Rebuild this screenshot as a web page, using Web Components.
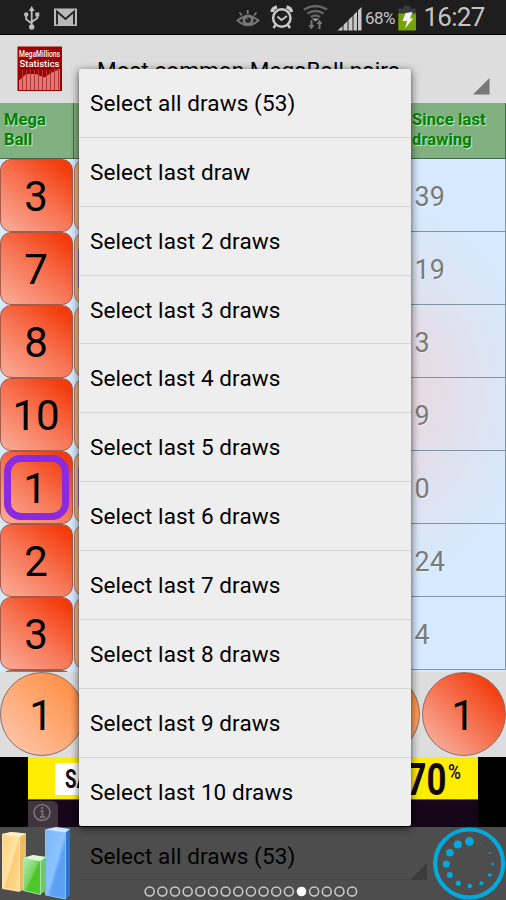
<!DOCTYPE html>
<html lang="en"><head><meta charset="utf-8"><title>MegaMillions Statistics</title>
<style>
body{margin:0;width:506px;height:900px;overflow:hidden;font-family:Roboto,"Liberation Sans",sans-serif;background:#ddd}
</style></head><body><stats-app></stats-app>
<script>
function define(name, render){
  customElements.define(name, class extends HTMLElement{
    connectedCallback(){
      if(this.shadowRoot) return;
      const t=document.createElement('template');
      t.innerHTML=render(this);
      this.attachShadow({mode:'open'}).append(t.content.cloneNode(true));
    }
  });
}
define('status-bar',()=>`
<style>
:host{display:flex;background:#1e1e1e;border-bottom:1px solid #000;box-sizing:border-box;height:35px;color:#c4c4c4}
svg{display:block;flex:none}
.pct{font-size:17px;line-height:36px;width:32px;white-space:nowrap;letter-spacing:-.6px}
.time{font-size:26px;line-height:35px;margin-left:6.500px;white-space:nowrap;letter-spacing:-.75px}
</style>
<svg width="365" height="34" viewBox="0 0 365 34">
<g fill="none" stroke="#bdbdbd" stroke-width="1.8"><path d="M31.7 9V27M26.2 15v4.200l5.500 4.300M37.400 14v4l-5.700 4"/></g>
<g fill="#bdbdbd"><path d="M31.700 6l3 5h-6z"/><circle cx="26.200" cy="14.500" r="2.200"/><rect x="35.300" y="12.500" width="4" height="4"/><circle cx="31.700" cy="27" r="2.700"/></g>
<rect x="54" y="8.500" width="23" height="17.500" fill="#b9b9b9"/><path d="M57 24.500V11.500L65.500 19 74 11.500V24.500" fill="none" stroke="#242424" stroke-width="1.900"/>
<g fill="none" stroke="#777" stroke-width="1.900"><path d="M237.500 20.500q10.500-9 21 0q-10.500 9.500-21 0z"/><path d="M247.700 10v4M239.500 12.500l2.500 3M256.500 12.500l-2.500 3"/><circle cx="248" cy="20" r="4.200" stroke-width="2.800"/></g><path d="M249 21l-4-3.500 1-1z" fill="#888"/>
<g fill="none" stroke="#c8c8c8"><circle cx="281.800" cy="18" r="8.700" stroke-width="2.500"/><path d="M277.500 16.500l4 3.500 5.500-4" stroke-width="1.900"/><path d="M272 12q.5-4 5-5M291.500 12q-.5-4-5-5" stroke-width="3.500"/><path d="M275.500 25l-2 3M288 25l2 3" stroke-width="2.500"/></g>
<g fill="none" stroke="#666" stroke-width="2.500"><path d="M304 9.500q11.500-7 23 0M307.500 13.500q8-5 16 0M311 17q4.500-3 9 0"/></g><path d="M312 18.500h7l-3.500 3z" fill="#aaa"/>
<path d="M311.500 20v6M319.500 29v-6" stroke="#777" stroke-width="2"/><path d="M308.500 25h6l-3 4.500zM316.500 24h6l-3-4.500z" fill="#777"/>
<g fill="#c8c8c8"><path d="M337.500 30.500l5-4.500v4.500zM343.500 25l4-4v9.500h-4zM348.500 20l4-4v14.500h-4zM353.500 15l3.500-3.500v19h-3.500zM358 10.500l3.500-3.500v23.500h-3.500z"/></g>
</svg>
<span class="pct">68%</span>
<svg width="20" height="34" viewBox="397 0 20 34"><path d="M403.500 6h7v2.500h5.300v5.500h-17.500v-5.500h5.200z" fill="#3c3c3c"/><rect x="398.300" y="13.500" width="17.700" height="17" fill="#76a307"/><path d="M405.500 13l7-1-2.500 6.500h3.200l-8.200 10 2-7.500h-4.500z" fill="#f2f2f2"/></svg>
<span class="time">16:27</span>`);

define('title-bar',()=>`
<style>
:host{display:flex;height:68px;background:#ddd;box-sizing:border-box;padding:11px 16px 0 17px;align-items:flex-start}
.logo{width:45px;height:45px;flex:none}
.t{flex:1;margin:11px 0 0 35px;font-size:22.5px;line-height:26px;color:#000;white-space:nowrap;letter-spacing:.07px}
.tri{margin-top:32px}
svg{display:block}
</style>
<svg class="logo" viewBox="0 0 45 45"><rect x=".5" y=".5" width="44.500" height="44.500" fill="#9d0000"/>
<path d="M2 44V34.500L9 28H19l8 3.500 8-5 8-3.500V44z" fill="#de7878"/>
<path d="M5.500 24v20M9.500 24v20M13.500 24v20M17.500 24v20M21.500 24v20M25.500 24v20M29.500 24v20M33.500 24v20M37.500 22v22M41.500 22v22" stroke="#b83535" stroke-width="1"/>
<g fill="#fff" font-family="Roboto" text-anchor="middle"><text x="22.500" y="10.800" font-size="8.400" font-weight="500" textLength="41" lengthAdjust="spacingAndGlyphs">MegaMillions</text><text x="22.500" y="20.800" font-size="9.900" font-weight="500" textLength="40" lengthAdjust="spacingAndGlyphs">Statistics</text></g></svg>
<span class="t"><slot></slot></span>
<svg class="tri" width="17" height="17"><path d="M16.500 0V16.500H0z" fill="#777"/></svg>`);

define('head-cell',()=>`
<style>:host{display:block;box-sizing:border-box;background:#81b081;border-right:1px solid #45684a;border-bottom:1px solid #45684a;color:#008200;font-weight:700;font-size:16.500px;line-height:20px;padding:6.500px 0 0 4px;text-shadow:1px 1px 1px #d5e8d5;letter-spacing:.1px}</style><slot></slot>`);
define('ball-tile',()=>`
<style>
:host{display:flex;box-sizing:border-box;height:73.100px;border:1px solid #a85a48;border-radius:11px;align-items:center;justify-content:center;font-size:42px;color:#000;background:linear-gradient(38deg,#faae9b 0%,#f77352 50%,#f33c0c 90%);position:relative;padding:2px 1px 0 0}
:host([tone=orange]){background:linear-gradient(90deg,#eeb48c,#ffb27c 40%,#ff9448);border-color:#a87a60}
:host([picked])::after{content:"";position:absolute;left:2.500px;top:3px;width:51px;height:51px;border:7px solid #8a2be2;border-radius:17px}
:host([picked]){padding-right:3px}
</style><slot></slot>`);
define('since-cell',()=>`
<style>:host{display:flex;box-sizing:border-box;height:73.100px;align-items:center;padding:4px 0 0 6.500px;border-bottom:1px solid #8394a5;border-right:1px solid #8394a5;color:#7b7b7b;font-size:27px;text-shadow:1px 1px 1px #fff8}</style><slot></slot>`);
define('stats-table',()=>{
  const balls=[3,7,8,10,1,2,3], since=[39,19,3,9,0,24,4];
  return `
<style>
:host{display:grid;grid-template-columns:74px 334px 98px;grid-template-rows:55.500px 513.500px;height:569px;overflow:hidden;background:radial-gradient(ellipse 140px 190px at 395px 290px,#e8d9df 0,#e4dee8 35%,#d5eafe 100%) #d5eafe}
.c{overflow:hidden}.c ball-tile{width:73px}
.m ball-tile{width:80px}
.m{overflow:hidden}
</style>
<head-cell>Mega<br>Ball</head-cell><head-cell></head-cell><head-cell>Since last<br>drawing</head-cell>
<div class="c">${balls.map((n,i)=>`<ball-tile${i===4?' picked':''}>${n}</ball-tile>`).join('')}<ball-tile></ball-tile></div>
<div class="m">${balls.map(()=>'<ball-tile tone="orange"></ball-tile>').join('')}</div>
<div>${since.map(n=>`<since-cell>${n}</since-cell>`).join('')}</div>`;
});
define('round-ball',()=>`
<style>:host{display:flex;box-sizing:border-box;flex:none;width:84px;height:84px;border:1px solid #8a6f62;border-radius:50%;align-items:center;justify-content:center;padding:3px 2px 0 0;font-size:42px;color:#000;background:linear-gradient(45deg,#ffc4a8 10%,#ff9148 85%)}
:host([tone=red]){background:linear-gradient(45deg,#f9ab98 12%,#f33e10 85%)}</style><slot></slot>`);
define('ball-row',()=>`
<style>:host{display:flex;height:85px;box-sizing:border-box;justify-content:space-between}
.r{display:flex;gap:2px}</style>
<round-ball>1</round-ball><div class="r"><round-ball></round-ball><round-ball tone="red">1</round-ball></div>`);
define('ad-banner',()=>`
<style>
:host{display:flex;height:70px;background:#000;padding:0 28px;box-sizing:border-box}
.ad{flex:1;display:grid;grid-template-rows:43px 27px;background:#150618}
.y{background:#ffed00;display:flex;justify-content:space-between;box-sizing:border-box;border-bottom:1px solid #6e6600;color:#150618;overflow:hidden}
.s{background:#fff;width:70px;height:32px;margin:6px 0 0 27px;padding-left:10px;box-sizing:border-box}
svg{display:block}
</style>
<div class="ad"><div class="y"><div class="s"><svg width="50" height="32"><text x="0" y="25" font-family="Roboto" font-weight="700" font-size="26" fill="#150618" transform="scale(.72 1)">SA</text></svg></div>
<svg width="90" height="42"><g fill="#150618" font-family="Roboto" font-weight="700"><text transform="translate(18.500 38) scale(.79 1)" font-size="44">70</text><text transform="translate(60 21.500) scale(.88 1)" font-size="20" font-weight="500">%</text></g></svg></div>
<svg width="32" height="27"><path d="M0 1h24q6 0 6 6v20H0z" fill="#40353f"/><circle cx="14" cy="12.500" r="8" fill="none" stroke="#777077" stroke-width="1.700"/><path d="M12.500 11h2v6M12 17h5M13 8h2.200" stroke="#777077" stroke-width="1.800" fill="none"/></svg></div>`);
define('bottom-bar',()=>{
  const rs=[4.4,4,3.8,3.5,3,2.6,2.3,2,1.8,1.3,1.1,.6];
  const pos=[[43.6,14.5],[32,17.600],[24,25.700],[20.500,37],[24,48],[32.500,56.200],[44,59],[55.500,56.200],[64,48],[67,37],[64,26],[55.500,17.600]];
  return `
<style>
:host{display:grid;grid-template-columns:79px 1fr 78px;height:73px;background:#4d4d4d;position:relative}
svg{display:block}
.sel{font-size:22.500px;line-height:26px;padding:16px 0 0 11px;letter-spacing:.1px;color:#000;box-sizing:border-box;height:53px;border-bottom:1px solid #454545}
.dots{position:absolute;left:144px;top:58px}
.tri{position:absolute;left:410px;top:36px}
</style>
<svg width="79" height="73" viewBox="0 827 79 73"><defs>
<linearGradient id="y" x2="1" y2="1"><stop stop-color="#ffd07c"/><stop offset=".5" stop-color="#ffe3a4"/><stop offset=".55" stop-color="#fccb75"/><stop offset="1" stop-color="#ffdf9e"/></linearGradient>
<linearGradient id="g" x2="1" y2="1"><stop stop-color="#b3eeb0"/><stop offset=".45" stop-color="#7bd568"/><stop offset=".55" stop-color="#4bc626"/><stop offset="1" stop-color="#4fc832"/></linearGradient>
<linearGradient id="b" x2="1" y2="1"><stop stop-color="#79b8fa"/><stop offset=".5" stop-color="#8cc3ff"/><stop offset=".6" stop-color="#5c9ff3"/><stop offset="1" stop-color="#5ba2f6"/></linearGradient></defs>
<path d="M2 834l9-2 15 1.500v55l-7 3.500-17-3z" fill="#e9ba69"/><path d="M2.500 834.500l17 2.500v54l-17-3z" fill="url(#y)" stroke="#ffe9b8" stroke-width=".8"/><path d="M2 834l9-2 15 1.500-6.500 3.500z" fill="#fff0cf"/>
<path d="M45 829.500l11-2.500 14 2v66l-4 4-21-4z" fill="#2e74cc"/><path d="M45.500 830l20 2.500v66.500l-20-4z" fill="url(#b)" stroke="#9ccbfd" stroke-width=".8"/><path d="M45 829.500l11-2.500 14 2-4.500 3.500z" fill="#cfe7ff"/>
<path d="M23 858l10-3 13 2v34l-6 3.500-17-4z" fill="#6cc872"/><path d="M23.500 858.500l17 2.500v33.500l-17-4z" fill="url(#g)" stroke="#b9edae" stroke-width=".8"/><path d="M23 858l10-3 13 2-5.500 4z" fill="#ddf8d8"/></svg>
<div class="sel">Select all draws (53)</div>
<svg width="78" height="73" viewBox="5 0 78 73"><circle cx="46.200" cy="36.500" r="34" fill="none" stroke="#04a9dc" stroke-width="4.200"/>
<g fill="#04a9dc" transform="translate(2.800 0)">${pos.map((p,i)=>`<circle cx="${p[0]}" cy="${p[1]}" r="${rs[i]}"/>`).join('')}</g></svg>
<svg class="tri" width="17" height="17"><path d="M17 0V17H0z" fill="#3b3b3b"/></svg>
<svg class="dots" width="216" height="14">${Array.from({length:17},(_,i)=>`<circle cx="${5.700+i*12.650}" cy="6.500" r="${i===12?4.800:4.500}" fill="${i===12?'#fff':'none'}" stroke="${i===12?'none':'#ccc'}" stroke-width="1.500"/>`).join('')}</svg>`;
});
define('draw-option',()=>`
<style>:host{display:block;box-sizing:border-box;height:68.930px;box-shadow:inset 0 -1px #d4d4d4;padding:21px 0 0 11px;font-size:22.500px;line-height:26px;letter-spacing:.1px;color:#000;white-space:nowrap}:host(:last-child){box-shadow:none}</style><slot></slot>`);
define('draw-menu',()=>`
<style>:host{display:block;position:absolute;left:79px;top:68.800px;width:331.500px;height:757.700px;background:#eee;border-radius:2px;box-shadow:0 2px 9px #000a,0 1px 1px #0009;overflow:hidden}</style><slot></slot>`);
define('stats-app',()=>{
  const opts=['Select all draws (53)','Select last draw'];
  for(let i=2;i<=10;i++) opts.push(`Select last ${i} draws`);
  return `
<style>
:host{display:flex;flex-direction:column;width:506px;height:900px;position:relative;background:#ddd;overflow:hidden}
.mark{position:absolute;left:78px;width:3px;height:39px;background:#8a6fd8}
</style>
<status-bar></status-bar><title-bar>Most common MegaBall pairs</title-bar><stats-table></stats-table><ball-row></ball-row><ad-banner></ad-banner><bottom-bar></bottom-bar>
<i class="mark" style="top:249px"></i><i class="mark" style="top:468px"></i>
<draw-menu>${opts.map(o=>`<draw-option>${o}</draw-option>`).join('')}</draw-menu>`;
});
</script></body></html>
